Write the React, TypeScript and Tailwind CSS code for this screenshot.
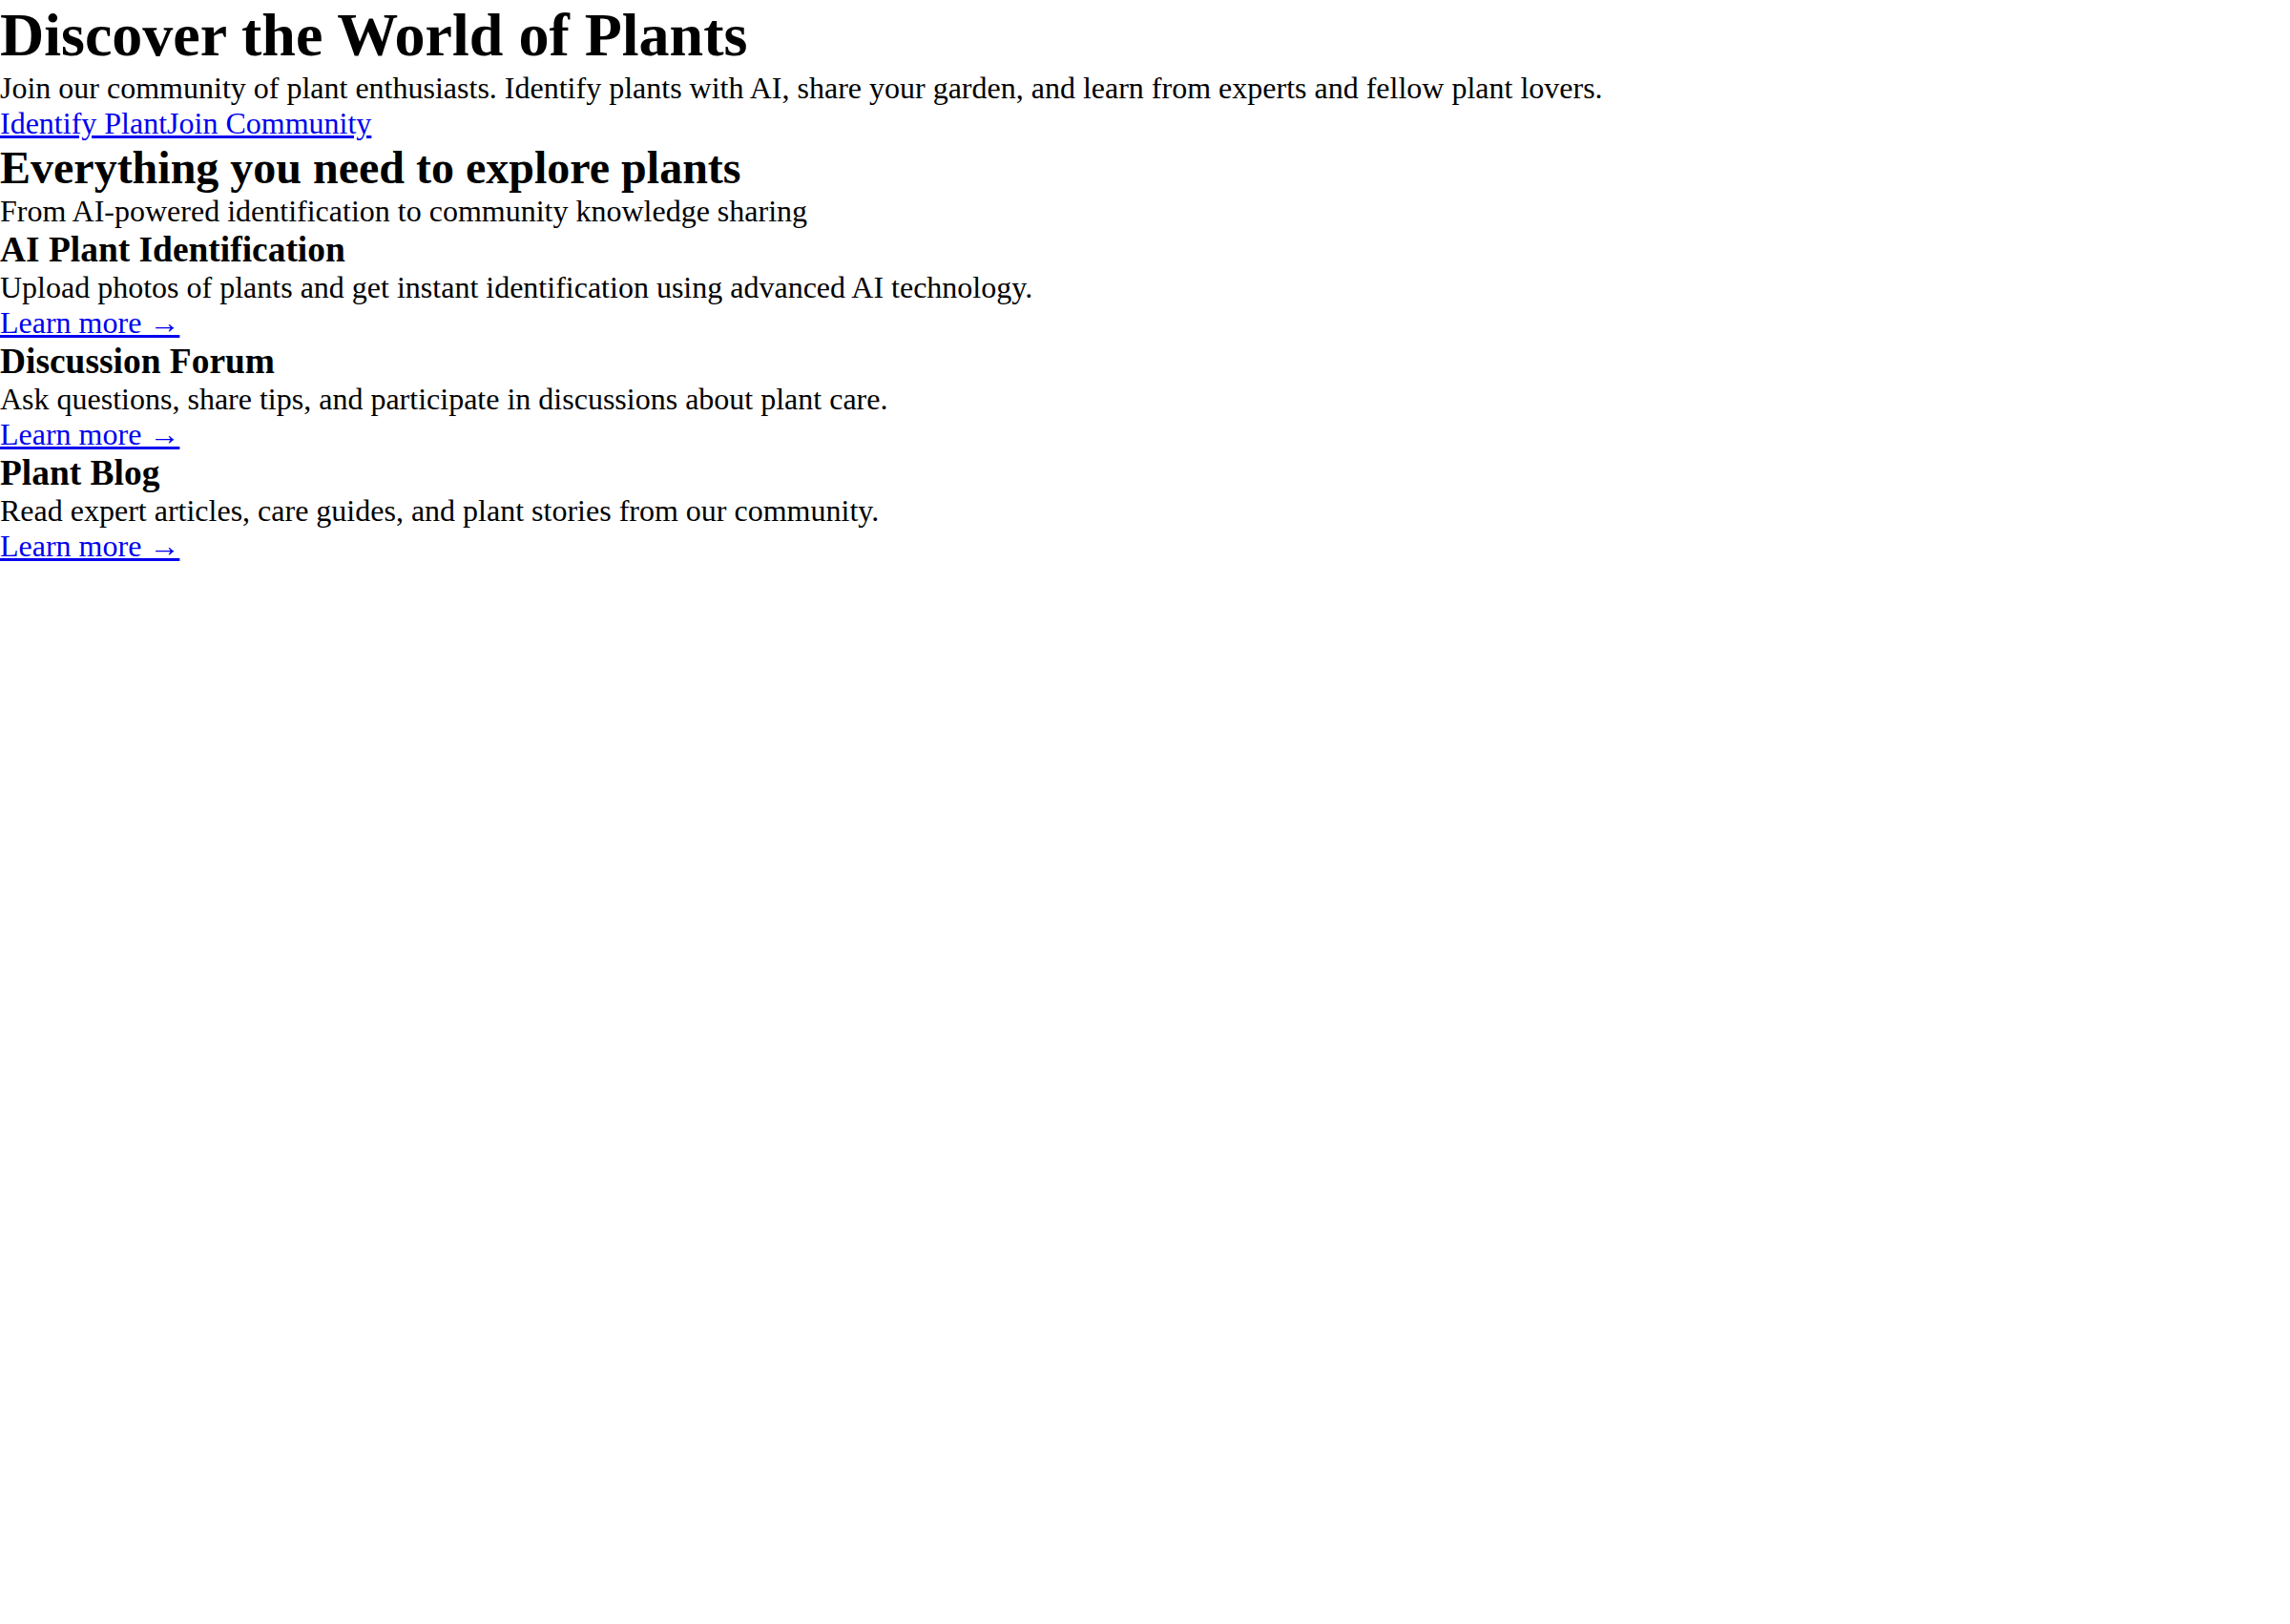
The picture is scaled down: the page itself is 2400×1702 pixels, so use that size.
import React from "react";

const features = [
  {
    title: "AI Plant Identification",
    desc: "Upload photos of plants and get instant identification using advanced AI technology.",
  },
  {
    title: "Discussion Forum",
    desc: "Ask questions, share tips, and participate in discussions about plant care.",
  },
  {
    title: "Plant Blog",
    desc: "Read expert articles, care guides, and plant stories from our community.",
  },
];

export default function App() {
  return (
    <div className="min-h-screen bg-white text-black font-['Liberation_Serif','Times_New_Roman',serif] text-[32px] leading-[normal]">
      <section>
        <h1 className="text-[64px] font-bold">Discover the World of Plants</h1>
        <p>
          Join our community of plant enthusiasts. Identify plants with AI, share your garden, and learn from experts and fellow plant lovers.
        </p>
        <div>
          <a href="#" className="text-[#0000ee] underline">Identify Plant</a>
          <a href="#" className="text-[#0000ee] underline">Join Community</a>
        </div>
      </section>
      <section>
        <h2 className="text-[48px] font-bold">Everything you need to explore plants</h2>
        <p>From AI-powered identification to community knowledge sharing</p>
        <div>
          {features.map((f) => (
            <div key={f.title}>
              <h3 className="text-[37.44px] font-bold">{f.title}</h3>
              <p>{f.desc}</p>
              <a href="#" className="text-[#0000ee] underline">Learn more →</a>
            </div>
          ))}
        </div>
      </section>
    </div>
  );
}
